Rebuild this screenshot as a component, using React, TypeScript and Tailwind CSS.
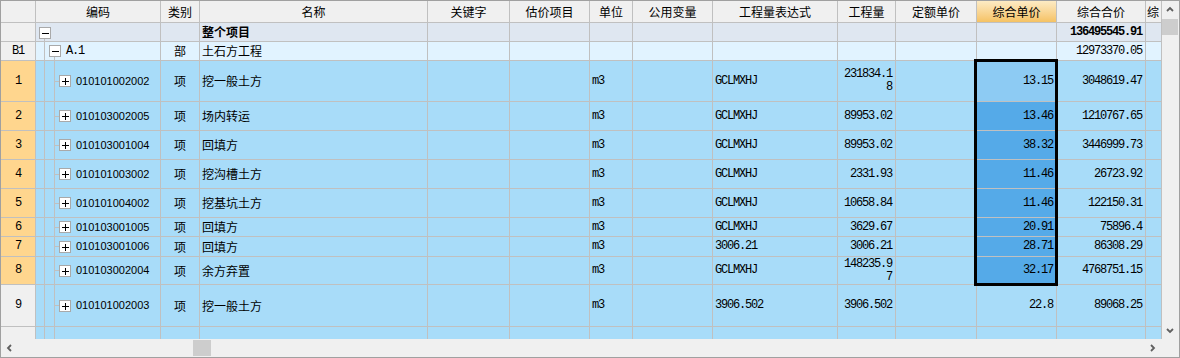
import type { ReactNode } from "react";

const LINE = "border-[#c0c0c0]";
const CJK = "font-['Noto_Sans_CJK_SC',sans-serif] text-[12px] leading-[14px]";
const MONO = "font-['Liberation_Mono','Noto_Sans_CJK_SC',monospace] text-[12px] leading-[13px] tracking-[-1.2px]";
const CODE = "font-['Liberation_Sans',sans-serif] text-[11px] leading-[13px]";

const BLUE = "bg-[#a8dcf9]";
const ORANGE = "bg-[#ffd68e]";
const GREY = "bg-[#f0f0f0]";
const SEL_LIGHT = "bg-[#8dcbf3]";
const SEL = "bg-[#55aae8]";

const W = {
  rh: "w-[35px]",
  code: "w-[125px]",
  type: "w-[39px]",
  name: "w-[228px]",
  key: "w-[82px]",
  est: "w-[80px]",
  unit: "w-[43px]",
  vars: "w-[80px]",
  expr: "w-[125px]",
  qty: "w-[58px]",
  price: "w-[81px]",
  unitp: "w-[80px]",
  total: "w-[89px]",
  last: "w-[16px]",
};

type Item = {
  no: string;
  code: string;
  name: string;
  expr: string;
  qty: string[];
  up: string;
  total: string;
  h: string;
  rh: string;
  sel: string;
};

const items: Item[] = [
  { no: "1", code: "010101002002", name: "挖一般土方", expr: "GCLMXHJ", qty: ["231834.1", "8"], up: "13.15", total: "3048619.47", h: "h-[41px]", rh: ORANGE, sel: SEL_LIGHT },
  { no: "2", code: "010103002005", name: "场内转运", expr: "GCLMXHJ", qty: ["89953.02"], up: "13.46", total: "1210767.65", h: "h-[29px]", rh: ORANGE, sel: SEL },
  { no: "3", code: "010103001004", name: "回填方", expr: "GCLMXHJ", qty: ["89953.02"], up: "38.32", total: "3446999.73", h: "h-[29px]", rh: ORANGE, sel: SEL },
  { no: "4", code: "010101003002", name: "挖沟槽土方", expr: "GCLMXHJ", qty: ["2331.93"], up: "11.46", total: "26723.92", h: "h-[29px]", rh: ORANGE, sel: SEL },
  { no: "5", code: "010101004002", name: "挖基坑土方", expr: "GCLMXHJ", qty: ["10658.84"], up: "11.46", total: "122150.31", h: "h-[29px]", rh: ORANGE, sel: SEL },
  { no: "6", code: "010103001005", name: "回填方", expr: "GCLMXHJ", qty: ["3629.67"], up: "20.91", total: "75896.4", h: "h-[19px]", rh: ORANGE, sel: SEL },
  { no: "7", code: "010103001006", name: "回填方", expr: "3006.21", qty: ["3006.21"], up: "28.71", total: "86308.29", h: "h-[20px]", rh: ORANGE, sel: SEL },
  { no: "8", code: "010103002004", name: "余方弃置", expr: "GCLMXHJ", qty: ["148235.9", "7"], up: "32.17", total: "4768751.15", h: "h-[28px]", rh: ORANGE, sel: SEL },
  { no: "9", code: "010101002003", name: "挖一般土方", expr: "3906.502", qty: ["3906.502"], up: "22.8", total: "89068.25", h: "h-[42px]", rh: GREY, sel: BLUE },
];

function Cell({ w, bg, className = "", children }: { w: string; bg: string; className?: string; children?: ReactNode }) {
  return (
    <div className={`${w} ${bg} shrink-0 h-full border-r ${LINE} flex items-center overflow-hidden whitespace-nowrap ${className}`}>
      {children}
    </div>
  );
}

function Row({ h, className = "", children }: { h: string; className?: string; children: ReactNode }) {
  return <div className={`flex shrink-0 ${h} border-b ${LINE} ${className}`}>{children}</div>;
}

function Box({ plus }: { plus?: boolean }) {
  return (
    <div className="w-[12px] h-[12px] shrink-0 bg-white border border-[#a9a9a9] flex items-center justify-center">
      <svg width="8" height="8" viewBox="0 0 8 8">
        <path d="M0.5 4h7" stroke="#000" strokeWidth="1" shapeRendering="crispEdges" />
        {plus && <path d="M4 0.5v7" stroke="#000" strokeWidth="1" shapeRendering="crispEdges" />}
      </svg>
    </div>
  );
}

function Chevron({ dir }: { dir: "up" | "down" | "left" | "right" }) {
  const d = {
    up: "M1 5l3-3 3 3",
    down: "M1 2l3 3 3-3",
    left: "M5 1L2 4l3 3",
    right: "M2 1l3 3-3 3",
  }[dir];
  return (
    <svg width="8" height="8" viewBox="0 0 8 8">
      <path d={d} fill="none" stroke="#606060" strokeWidth="1.8" />
    </svg>
  );
}

function Blank({ bg }: { bg: string }) {
  return (
    <>
      <Cell w={W.key} bg={bg} />
      <Cell w={W.est} bg={bg} />
    </>
  );
}

export default function App() {
  const headers: [string, string, string][] = [
    [W.rh, "", GREY],
    [W.code, "编码", GREY],
    [W.type, "类别", GREY],
    [W.name, "名称", GREY],
    [W.key, "关键字", GREY],
    [W.est, "估价项目", GREY],
    [W.unit, "单位", GREY],
    [W.vars, "公用变量", GREY],
    [W.expr, "工程量表达式", GREY],
    [W.qty, "工程量", GREY],
    [W.price, "定额单价", GREY],
    [W.unitp, "综合单价", "bg-linear-to-b from-[#fdebc4] to-[#f5c263]"],
    [W.total, "综合合价", GREY],
  ];

  return (
    <div className="w-[1180px] h-[358px] border border-[#a0a0a0] bg-[#f0f0f0] flex flex-col overflow-hidden text-black">
      <div className="flex h-[338px] shrink-0">
        {/* grid */}
        <div className="relative w-[1161px] h-full flex flex-col overflow-hidden">
          <Row h="h-[22px]">
            {headers.map(([w, t, bg], i) => (
              <Cell key={i} w={w} bg={bg} className={`justify-center ${CJK}`}>
                {t}
              </Cell>
            ))}
            <Cell w={W.last} bg={GREY} className={`pl-[1px] ${CJK}`}>
              综
            </Cell>
          </Row>

          {/* whole project */}
          <Row h="h-[19px]" className="bg-[#dfe7f1]">
            <Cell w={W.rh} bg={GREY} />
            <Cell w={W.code} bg="" className="items-stretch">
              <div className="ml-[3px] w-[12px] flex flex-col">
                <div className="mt-[4px]">
                  <Box />
                </div>
                <div className={`flex-1 ml-[5px] border-l ${LINE}`} />
              </div>
            </Cell>
            <Cell w={W.type} bg="" />
            <Cell w={W.name} bg="" className={`pl-[2px] font-bold ${CJK}`}>
              整个项目
            </Cell>
            <Blank bg="" />
            <Cell w={W.unit} bg="" />
            <Cell w={W.vars} bg="" />
            <Cell w={W.expr} bg="" />
            <Cell w={W.qty} bg="" />
            <Cell w={W.price} bg="" />
            <Cell w={W.unitp} bg="" />
            <Cell w={W.total} bg="" className={`justify-end pr-[3px] font-bold ${MONO} tracking-[-0.2px]`}>
              136495545.91
            </Cell>
            <Cell w={W.last} bg="" />
          </Row>

          {/* B1 */}
          <Row h="h-[19px]" className="bg-[#e1f3ff]">
            <Cell w={W.rh} bg={GREY} className={`justify-center ${MONO}`}>
              B1
            </Cell>
            <Cell w={W.code} bg="" className="items-stretch">
              <div className="w-[8px] shrink-0" />
              <div className={`w-[5px] shrink-0 border-l ${LINE}`} />
              <div className="w-[12px] shrink-0 flex flex-col">
                <div className="mt-[3px]">
                  <Box />
                </div>
                <div className={`flex-1 ml-[5px] border-l ${LINE}`} />
              </div>
              <div className={`ml-[5px] flex items-center ${MONO}`}>A.1</div>
            </Cell>
            <Cell w={W.type} bg="" className={`justify-center ${CJK}`}>
              部
            </Cell>
            <Cell w={W.name} bg="" className={`pl-[2px] ${CJK}`}>
              土石方工程
            </Cell>
            <Blank bg="" />
            <Cell w={W.unit} bg="" />
            <Cell w={W.vars} bg="" />
            <Cell w={W.expr} bg="" />
            <Cell w={W.qty} bg="" />
            <Cell w={W.price} bg="" />
            <Cell w={W.unitp} bg="" />
            <Cell w={W.total} bg="" className={`justify-end pr-[3px] ${MONO}`}>
              12973370.05
            </Cell>
            <Cell w={W.last} bg="" />
          </Row>

          {items.map((it) => (
            <Row key={it.no} h={it.h} className={BLUE}>
              <Cell w={W.rh} bg={it.rh} className={`justify-center ${MONO}`}>
                {it.no}
              </Cell>
              <Cell w={W.code} bg="" className="items-stretch">
                <div className="w-[8px] shrink-0" />
                <div className={`w-[10px] shrink-0 border-l ${LINE}`} />
                <div className={`w-[5px] shrink-0 border-l ${LINE} flex items-center`}>
                  <div className="h-px w-full bg-[#c0c0c0]" />
                </div>
                <div className="flex items-center">
                  <Box plus />
                  <span className={`ml-[5px] ${CODE}`}>{it.code}</span>
                </div>
              </Cell>
              <Cell w={W.type} bg="" className={`justify-center ${CJK}`}>
                项
              </Cell>
              <Cell w={W.name} bg="" className={`pl-[2px] ${CJK}`}>
                {it.name}
              </Cell>
              <Blank bg="" />
              <Cell w={W.unit} bg="" className={`pl-[2px] ${MONO}`}>
                m3
              </Cell>
              <Cell w={W.vars} bg="" />
              <Cell w={W.expr} bg="" className={`pl-[2px] ${MONO}`}>
                {it.expr}
              </Cell>
              <Cell w={W.qty} bg="" className={`justify-end pr-[3px] ${MONO}`}>
                <div className="flex flex-col items-end">
                  {it.qty.map((q) => (
                    <span key={q}>{q}</span>
                  ))}
                </div>
              </Cell>
              <Cell w={W.price} bg="" />
              <Cell w={W.unitp} bg={it.sel} className={`justify-end pr-[3px] ${MONO}`}>
                {it.up}
              </Cell>
              <Cell w={W.total} bg="" className={`justify-end pr-[3px] ${MONO}`}>
                {it.total}
              </Cell>
              <Cell w={W.last} bg="" />
            </Row>
          ))}

          {/* partial row */}
          <div className={`flex flex-1 ${BLUE}`}>
            <Cell w={W.rh} bg={GREY} />
            <Cell w={W.code} bg="" className="items-stretch">
              <div className="w-[8px] shrink-0" />
              <div className={`w-[10px] shrink-0 border-l ${LINE}`} />
              <div className={`w-[5px] shrink-0 border-l ${LINE}`} />
            </Cell>
            <Cell w={W.type} bg="" />
            <Cell w={W.name} bg="" />
            <Blank bg="" />
            <Cell w={W.unit} bg="" />
            <Cell w={W.vars} bg="" />
            <Cell w={W.expr} bg="" />
            <Cell w={W.qty} bg="" />
            <Cell w={W.price} bg="" />
            <Cell w={W.unitp} bg="" />
            <Cell w={W.total} bg="" />
            <Cell w={W.last} bg="" />
          </div>

          {/* selection frame */}
          <div className="absolute left-[973px] top-[58px] w-[84px] h-[227px] border-[3px] border-black pointer-events-none" />
        </div>

        {/* vertical scrollbar */}
        <div className="w-[17px] h-full flex flex-col bg-[#f0f0f0]">
          <div className="h-[18px] flex items-center justify-center pr-[1px]">
            <Chevron dir="up" />
          </div>
          <div className="h-[16px] w-[16px] bg-[#cdcdcd]" />
          <div className="flex-1" />
          <div className="h-[17px] flex items-center justify-center pr-[1px]">
            <Chevron dir="down" />
          </div>
        </div>
      </div>

      {/* horizontal scrollbar */}
      <div className="flex h-[18px] bg-[#f0f0f0]">
        <div className="w-[18px] flex items-center justify-center">
          <Chevron dir="left" />
        </div>
        <div className="w-[174px]" />
        <div className="w-[18px] my-[1px] bg-[#cdcdcd]" />
        <div className="flex-1" />
        <div className="w-[18px] flex items-center justify-center">
          <Chevron dir="right" />
        </div>
        <div className="w-[17px]" />
      </div>
    </div>
  );
}
